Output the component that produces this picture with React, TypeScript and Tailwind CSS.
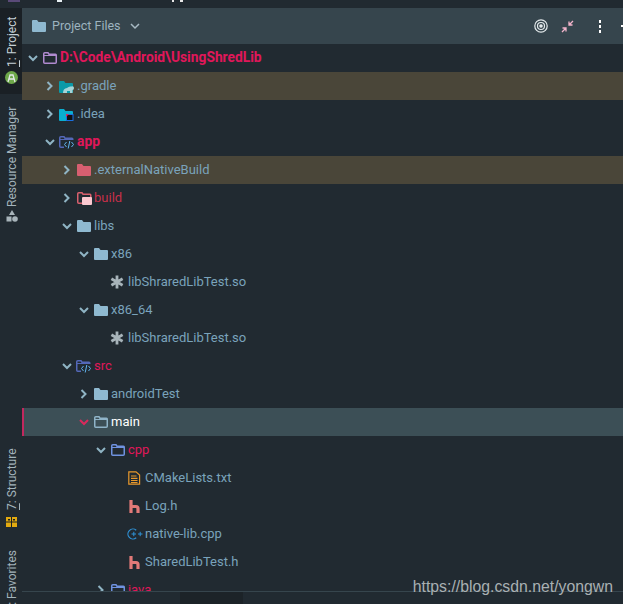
import React from "react";

const FONT = "font-['Roboto','Noto_Sans',sans-serif]";

function Chevron({ open, pink }: { open: boolean; pink?: boolean }) {
  const c = pink ? "#d92a5c" : "#8fb4c4";
  return (
    <svg width="12" height="12" viewBox="0 0 12 12" fill="none" stroke={c} strokeWidth="2">
      {open ? <path d="M2 4 L6 8 L10 4" /> : <path d="M3.5 2 L7.5 6 L3.5 10" />}
    </svg>
  );
}

function Folder({ fill = "#8fb9d0" }: { fill?: string }) {
  return (
    <svg width="14" height="12" viewBox="0 0 14 12">
      <path d="M0 1 Q0 0 1 0 H5 L6.5 2 H13 Q14 2 14 3 V11 Q14 12 13 12 H1 Q0 12 0 11 Z" fill={fill} />
    </svg>
  );
}

function OutlineFolder({ color, w = 14 }: { color: string; w?: number }) {
  return (
    <svg width={w} height="12" viewBox={`0 0 ${w} 12`} fill="none" stroke={color} strokeWidth="1.5">
      <path d={`M.75 1.75 Q.75 .75 1.75 .75 H5 L6 2.25 H${w - 1.5} Q${w - 0.75} 2.25 ${w - 0.75} 3 V10.25 Q${w - 0.75} 11.25 ${w - 1.75} 11.25 H1.75 Q.75 11.25 .75 10.25 Z`} />
      <path d={`M.75 3.5 H${w - 0.75}`} strokeWidth="1" />
    </svg>
  );
}

function SourceFolder() {
  return (
    <svg width="16" height="13" viewBox="0 0 16 13" fill="none" className="-ml-px">
      <path d="M.75 1.75 Q.75 .75 1.75 .75 H5 L6 2.25 H13 Q13.75 2.25 13.75 3 V10.25 Q13.75 11.25 12.75 11.25 H1.75 Q.75 11.25 .75 10.25 Z" stroke="#5468b8" strokeWidth="1.5" />
      <path d="M.75 3.5 H13.75" stroke="#5468b8" />
      <rect x="5" y="4" width="10" height="9" fill="#212a31" />
      <path d="M7.5 6 L5.5 8.5 L7.5 11 M12.5 6 L14.5 8.5 L12.5 11 M10.8 5 L9.2 12.5" stroke="#62b5ee" strokeWidth="1" />
    </svg>
  );
}

function GradleFolder() {
  return (
    <svg width="15" height="13" viewBox="0 0 15 13" className="-ml-px">
      <path d="M0 2 Q0 1 1 1 H5 L6.5 3 H13 Q14 3 14 4 V12 Q14 13 13 13 H1 Q0 13 0 12 Z" fill="#0a9aa8" />
      <path d="M4 13 Q4 8.5 8 8 Q10 6 12 6.5 Q15 5.5 15 8 Q15 10 13.5 10 V13 H11 V11 H8 V13 Z" fill="#a6d5d8" />
    </svg>
  );
}

function IdeaFolder() {
  return (
    <svg width="15" height="13" viewBox="0 0 15 13" className="-ml-px">
      <path d="M0 2 Q0 1 1 1 H5 L6.5 3 H13 Q14 3 14 4 V12 Q14 13 13 13 H1 Q0 13 0 12 Z" fill="#0aaed0" />
      <rect x="7.5" y="6.5" width="6.5" height="6" fill="#111" stroke="#1a6fe0" />
      <path d="M7 6 L10 6 L7 9 Z" fill="#e0245e" />
    </svg>
  );
}

function BuildFolder() {
  return (
    <svg width="16" height="13" viewBox="0 0 16 13">
      <path d="M.75 1.75 Q.75 .75 1.75 .75 H5 L6 2.25 H13 Q13.75 2.25 13.75 3 V10.25 Q13.75 11.25 12.75 11.25 H1.75 Q.75 11.25 .75 10.25 Z" fill="none" stroke="#d8606e" strokeWidth="1.5" />
      <rect x="5" y="5" width="10" height="8" rx="1" fill="#fbc8d0" />
    </svg>
  );
}

function Asterisk() {
  return (
    <svg width="14" height="14" viewBox="0 0 14 14" stroke="#a8b4ba" strokeWidth="2.8" className="-ml-px">
      <path d="M7 .5 V13.5 M1.4 3.8 L12.6 10.2 M12.6 3.8 L1.4 10.2" />
    </svg>
  );
}

function TextFile() {
  return (
    <svg width="13" height="14" viewBox="0 0 13 14" fill="none" stroke="#e8982c" strokeWidth="1.2">
      <path d="M.8 .8 H8 L11.6 4 V13.2 H.8 Z" />
      <path d="M3 5 H8.5 M3 7.3 H9.5 M3 9.5 H9.5 M3 11.5 H9.5" />
    </svg>
  );
}

function HIcon() {
  return (
    <svg width="11" height="13" viewBox="0 0 11 13" fill="none" stroke="#e27a78" strokeWidth="3.2" className="ml-px">
      <path d="M2 0 V13 M2 6.5 H7 Q9 6.5 9 8.5 V13" />
    </svg>
  );
}

function CppIcon() {
  return (
    <svg width="16" height="12" viewBox="0 0 16 12" fill="none" stroke="#2f93d8" strokeWidth="1.2" className="-ml-px">
      <path d="M9.2 2.2 A5 5 0 1 0 9.2 9.8" />
      <path d="M4.5 6 H9 M6.8 3.8 V8.2 M11 6 H15.5 M13.2 3.8 V8.2" strokeWidth="1" />
    </svg>
  );
}

type Row = {
  label: string;
  depth: number;
  chevron?: "open" | "closed";
  icon: React.ReactNode;
  text?: string;
  bold?: boolean;
  bg?: string;
  pinkChevron?: boolean;
};

const pink = "text-[#e0175a]";

const rows: Row[] = [
  { label: "D:\\Code\\Android\\UsingShredLib", depth: 0, chevron: "open", icon: <OutlineFolder color="#b08ad0" />, text: pink, bold: true },
  { label: ".gradle", depth: 1, chevron: "closed", icon: <GradleFolder />, bg: "bg-[#4a4639]" },
  { label: ".idea", depth: 1, chevron: "closed", icon: <IdeaFolder /> },
  { label: "app", depth: 1, chevron: "open", icon: <SourceFolder />, text: pink, bold: true },
  { label: ".externalNativeBuild", depth: 2, chevron: "closed", icon: <Folder fill="#d85f70" />, bg: "bg-[#4a4639]" },
  { label: "build", depth: 2, chevron: "closed", icon: <BuildFolder />, text: "text-[#c8304a]" },
  { label: "libs", depth: 2, chevron: "open", icon: <Folder /> },
  { label: "x86", depth: 3, chevron: "open", icon: <Folder /> },
  { label: "libShraredLibTest.so", depth: 4, icon: <Asterisk /> },
  { label: "x86_64", depth: 3, chevron: "open", icon: <Folder /> },
  { label: "libShraredLibTest.so", depth: 4, icon: <Asterisk /> },
  { label: "src", depth: 2, chevron: "open", icon: <SourceFolder />, text: pink },
  { label: "androidTest", depth: 3, chevron: "closed", icon: <Folder /> },
  { label: "main", depth: 3, chevron: "open", icon: <OutlineFolder color="#8fb4c8" />, text: "text-white", bg: "bg-[#3c4f56]", pinkChevron: true },
  { label: "cpp", depth: 4, chevron: "open", icon: <OutlineFolder color="#6f92e0" />, text: pink },
  { label: "CMakeLists.txt", depth: 5, icon: <TextFile /> },
  { label: "Log.h", depth: 5, icon: <HIcon /> },
  { label: "native-lib.cpp", depth: 5, icon: <CppIcon /> },
  { label: "SharedLibTest.h", depth: 5, icon: <HIcon /> },
  { label: "java", depth: 4, chevron: "closed", icon: <OutlineFolder color="#6f92e0" />, text: pink },
];

const indent = ["pl-[4px]", "pl-[21px]", "pl-[38px]", "pl-[55px]", "pl-[72px]", "pl-[89px]"];

function TreeRow({ r }: { r: Row }) {
  const selected = r.pinkChevron;
  return (
    <div className={`relative flex h-[28px] shrink-0 items-center ${r.bg ?? ""} ${indent[r.depth]}`}>
      {selected && <div className="absolute inset-y-0 left-0 w-[2px] bg-[#c2285e]" />}
      <div className="flex w-[14px] shrink-0 justify-center">
        {r.chevron && <Chevron open={r.chevron === "open"} pink={r.pinkChevron} />}
      </div>
      <div className="ml-[3px] flex w-[17px] shrink-0 items-center">{r.icon}</div>
      <span className={`whitespace-nowrap leading-none ${r.bold ? "text-[13.8px] font-bold" : "pb-[2px] text-[13px]"} ${r.text ?? "text-[#7aa3bb]"}`}>
        {r.label}
      </span>
    </div>
  );
}

function VLabel({ children, className = "" }: { children: React.ReactNode; className?: string }) {
  return (
    <span className={`shrink-0 rotate-180 whitespace-nowrap pr-[2px] text-[12px] leading-[20px] [writing-mode:vertical-rl] ${className}`}>
      {children}
    </span>
  );
}

export default function App() {
  return (
    <div className={`relative flex h-[604px] w-[623px] overflow-hidden bg-[#212a31] ${FONT}`}>
      {/* tool window rail */}
      <div className="flex h-[604px] w-[22px] shrink-0 flex-col items-center overflow-hidden pt-[8px] text-[#a3b3bb]">
        <div className="flex h-[86px] w-full shrink-0 flex-col items-center bg-[#1a2025] pt-[10px]">
          <VLabel className="h-[49px] text-[#c4d0d6]">
            <span className="underline">1</span>: Project
          </VLabel>
          <svg width="13" height="13" viewBox="0 0 13 13" className="ml-px mt-[4px] shrink-0">
            <circle cx="6.5" cy="6.5" r="6.5" fill="#6ea84a" />
            <path d="M3 11 L5 4 H8 L10 11 M4 8 H9" stroke="#e3e8e8" strokeWidth="1.3" fill="none" />
          </svg>
        </div>
        <VLabel className="mt-[15px] h-[98px]">Resource Manager</VLabel>
        <svg width="12" height="12" viewBox="0 0 12 12" className="ml-px mt-[3px] shrink-0" fill="#a8b4ba">
          <path d="M6 0 L9 5 H3 Z" />
          <rect x="0.5" y="6.5" width="5" height="5" />
          <circle cx="9" cy="9" r="2.8" />
        </svg>
        <VLabel className="mt-[228px] h-[60px]">
          <span className="underline">7</span>: Structure
        </VLabel>
        <svg width="11" height="10" viewBox="0 0 11 10" className="ml-px mt-[7px] shrink-0">
          <rect width="11" height="10" fill="#e2aa10" />
          <path d="M5.5 0 V10 M0 5 H11" stroke="#1a2025" strokeWidth="1" />
          <rect x="2" y="2" width="2" height="1.5" fill="#1a2025" />
          <rect x="7" y="2" width="2" height="1.5" fill="#1a2025" />
        </svg>
        <VLabel className="mt-[23px]">: Favorites</VLabel>
      </div>

      {/* project panel */}
      <div className="flex min-w-0 flex-1 flex-col">
        <div className="h-[8px] shrink-0" />
        <div className="flex h-[36px] shrink-0 items-center bg-[#36454d] pl-[10px]">
          <Folder />
          <span className="ml-[6px] text-[12.5px] text-[#9db3bf]">Project Files</span>
          <svg width="10" height="7" viewBox="0 0 10 7" className="ml-[9px]" fill="none" stroke="#a8bac4" strokeWidth="1.5">
            <path d="M1 1 L5 5 L9 1" />
          </svg>
          <div className="ml-auto flex items-center">
            <svg width="14" height="14" viewBox="0 0 14 14" fill="none" stroke="#e4eaec" strokeWidth="1.2">
              <circle cx="7" cy="7" r="6.2" />
              <circle cx="7" cy="7" r="3.5" />
              <circle cx="7" cy="7" r="1.2" fill="#e4eaec" />
            </svg>
            <svg width="13" height="13" viewBox="0 0 13 13" className="ml-[13px]" fill="none" stroke="#f5b5cc" strokeWidth="1.3">
              <path d="M12 1 L8 5 M8 1.5 V5 H11.5 M1 12 L5 8 M5 11.5 V8 H1.5" />
            </svg>
            <div className="ml-[25px] flex flex-col gap-[2px]">
              <div className="h-[3px] w-[2px] bg-white" />
              <div className="h-[3px] w-[2px] bg-white" />
              <div className="h-[3px] w-[2px] bg-white" />
            </div>
            <div className="ml-[20px] h-[2px] w-[2px] bg-white" />
          </div>
        </div>
        <div className="min-h-0 flex-1 overflow-hidden">
          {rows.map((r, i) => (
            <TreeRow key={i} r={r} />
          ))}
        </div>
      </div>

      {/* bottom edge */}
      <div className="absolute bottom-0 left-[22px] right-0 h-[13px] border-t border-[#36454d] bg-[#212a31]">
        <div className="ml-[158px] h-full w-[63px] bg-[#1c2328]" />
      </div>

      {/* watermark */}
      <span className="absolute bottom-[9px] right-[10px] font-['Liberation_Sans',sans-serif] text-[15.8px] leading-none text-[#a9b0b3]">
        https://blog.csdn.net/yongwn
      </span>

      {/* scraps of the window above, along the top edge */}
      <div className="absolute left-[8px] top-0 h-[2px] w-[12px] bg-[#5a4a78]" />
      <div className="absolute left-[57px] top-0 h-[2px] w-[5px] bg-[#e8f0f4]" />
      <div className="absolute left-[172px] top-0 h-[2px] w-[2px] bg-[#e8e8e8]" />
      <div className="absolute left-[180px] top-0 h-[2px] w-[3px] bg-[#e8e8e8]" />
    </div>
  );
}
